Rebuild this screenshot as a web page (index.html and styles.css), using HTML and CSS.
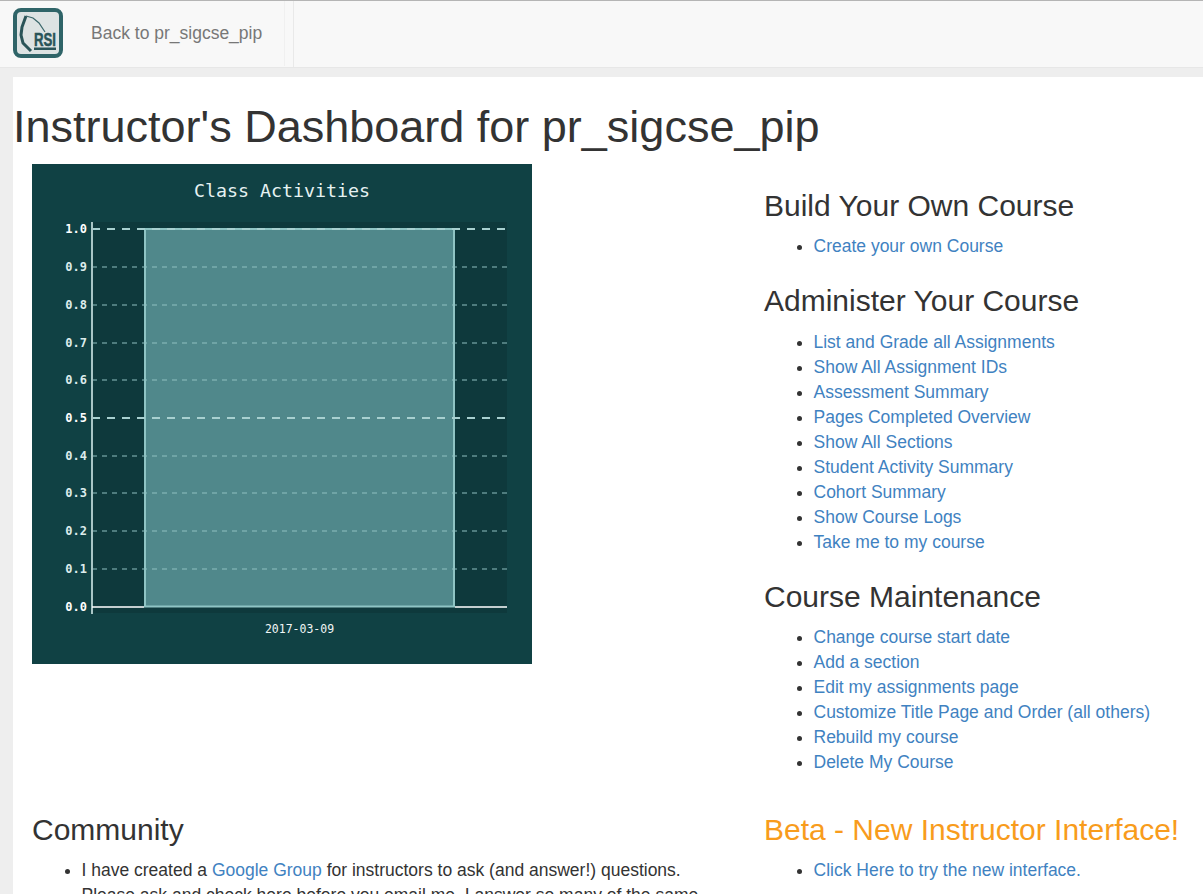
FILE: index.html
```html
<!DOCTYPE html>
<html lang="en">
<head>
<meta charset="utf-8">
<title>Instructor's Dashboard</title>
<link rel="stylesheet" href="styles.css">
</head>
<body>
<nav class="navbar">
  <a class="brand" href="#">
    <svg class="logo" width="50" height="50" viewBox="0 0 50 50">
      <rect x="2" y="2" width="46" height="46" rx="6" fill="#dde3e3" stroke="#2f6468" stroke-width="4"/>
      <path d="M13 8 L9 19 L8 27 L10 35 L18 43" fill="none" stroke="#2a5458" stroke-width="3"/>
      <path d="M13 8 L20 10 L26 15 L32 24" fill="none" stroke="#3a666a" stroke-width="1.200"/>
      <text x="21" y="38" class="logo-text" textLength="22" lengthAdjust="spacingAndGlyphs">RSI</text>
      <rect x="21" y="39.500" width="22" height="2.500" fill="#2a5458"/>
    </svg>
  </a>
  <a class="nav-link" href="#">Back to pr_sigcse_pip</a>
  <div class="nav-cell"></div>
</nav>
<main class="page">
  <h1>Instructor's Dashboard for pr_sigcse_pip</h1>
  <div class="row row-top">
    <div class="col">
      <svg class="chart" width="500" height="500" viewBox="0 0 500 500">
        <rect width="500" height="500" fill="#104144"/>
        <rect x="60" y="58" width="415" height="391" fill="#0e393c"/>
        <text x="250" y="33" class="title">Class Activities</text>
        <rect x="113" y="65" width="309" height="377.500" fill="#50888b" stroke="#8fc4c4" stroke-width="2"/>
        <g class="grid">
          <path d="M60 103H475M60 141H475M60 179H475M60 216H475M60 292H475M60 329H475M60 367H475M60 405H475"/>
        </g>
        <g class="grid-major">
          <path d="M60 65H475M60 254H475"/>
        </g>
        <path d="M60 58V450" stroke="#a9c6c6" stroke-width="2" fill="none"/>
        <path d="M60 443H112M423 443H475" stroke="#ffffff" stroke-width="1.500" fill="none"/>
        <g class="ticks">
          <text x="55" y="69" class="strong">1.0</text>
          <text x="55" y="107">0.9</text>
          <text x="55" y="145">0.8</text>
          <text x="55" y="183">0.7</text>
          <text x="55" y="220">0.6</text>
          <text x="55" y="258" class="strong">0.5</text>
          <text x="55" y="296">0.4</text>
          <text x="55" y="333">0.3</text>
          <text x="55" y="371">0.2</text>
          <text x="55" y="409">0.1</text>
          <text x="55" y="447" class="strong">0.0</text>
        </g>
        <text x="267.500" y="469" class="date">2017-03-09</text>
      </svg>
    </div>
    <div class="col col-links">
      <h3>Build Your Own Course</h3>
      <ul>
        <li><a href="#">Create your own Course</a></li>
      </ul>
      <h3>Administer Your Course</h3>
      <ul>
        <li><a href="#">List and Grade all Assignments</a></li>
        <li><a href="#">Show All Assignment IDs</a></li>
        <li><a href="#">Assessment Summary</a></li>
        <li><a href="#">Pages Completed Overview</a></li>
        <li><a href="#">Show All Sections</a></li>
        <li><a href="#">Student Activity Summary</a></li>
        <li><a href="#">Cohort Summary</a></li>
        <li><a href="#">Show Course Logs</a></li>
        <li><a href="#">Take me to my course</a></li>
      </ul>
      <h3>Course Maintenance</h3>
      <ul>
        <li><a href="#">Change course start date</a></li>
        <li><a href="#">Add a section</a></li>
        <li><a href="#">Edit my assignments page</a></li>
        <li><a href="#">Customize Title Page and Order (all others)</a></li>
        <li><a href="#">Rebuild my course</a></li>
        <li><a href="#">Delete My Course</a></li>
      </ul>
    </div>
  </div>
  <div class="row row-bottom">
    <div class="col">
      <h3>Community</h3>
      <ul>
        <li>I have created a <a href="#">Google Group</a> for instructors to ask (and answer!) questions. Please ask and check here before you email me. I answer so many of the same questions over and over.</li>
      </ul>
    </div>
    <div class="col">
      <h3 class="beta">Beta - New Instructor Interface!</h3>
      <ul>
        <li><a href="#">Click Here to try the new interface.</a></li>
      </ul>
    </div>
  </div>
</main>
</body>
</html>
```
FILE: styles.css
```css
html, body {
  margin: 0;
  padding: 0;
  height: 894px;
  overflow: hidden;
}
body {
  background: #eeeeee;
  color: #333333;
  font-family: "Liberation Sans", Arial, sans-serif;
  font-size: 17.5px;
  line-height: 25px;
}
a {
  color: #3f82c1;
  text-decoration: none;
}
.navbar {
  display: flex;
  height: 66px;
  background: #f8f8f8;
  border-top: 1px solid #b5b5b5;
  border-bottom: 1px solid #e7e7e7;
  margin-bottom: 9px;
}
.brand {
  display: flex;
  align-items: center;
  padding: 0 4px 0 13px;
  height: 63px;
}
.logo-text {
  font-family: "Liberation Sans", Arial, sans-serif;
  font-size: 18px;
  font-weight: 700;
  fill: #2a5458;
  stroke: #2a5458;
  stroke-width: 0.5;
}
.nav-link {
  display: flex;
  align-items: center;
  height: 65px;
  padding: 0 22px 0 24px;
  color: #777777;
  border-right: 1px solid #f0f0f0;
}
.nav-cell {
  width: 8px;
  border-right: 1px solid #e9e9e9;
}
.page {
  margin-left: 13px;
  background: #ffffff;
  height: 817px;
  overflow: hidden;
}
h1 {
  margin: 0;
  padding: 24px 0 11px;
  font-weight: 400;
  font-size: 45px;
  line-height: 52px;
}
.row {
  display: grid;
  grid-template-columns: 732px 1fr;
}
.row-bottom {
  margin-top: 28px;
}
.col {
  padding: 0 19px;
  min-width: 0;
}
.chart {
  display: block;
}
.title {
  font-family: "DejaVu Sans Mono", monospace;
  font-size: 18.300px;
  fill: #e6f2f2;
  text-anchor: middle;
}
.ticks text {
  font-family: "DejaVu Sans Mono", monospace;
  font-size: 12px;
  font-weight: 700;
  fill: #dcecec;
  text-anchor: end;
}
.ticks .strong {
  fill: #ffffff;
}
.date {
  font-family: "DejaVu Sans Mono", monospace;
  font-size: 11.500px;
  fill: #f0f6f6;
  text-anchor: middle;
}
.grid path {
  stroke: #8fc0c0;
  stroke-width: 1;
  stroke-dasharray: 5 5;
  fill: none;
}
.grid-major path {
  stroke: #a8d0d0;
  stroke-width: 2;
  stroke-dasharray: 8 7;
  fill: none;
}
h3 {
  margin: 26px 0 12.400px;
  font-weight: 400;
  font-size: 30px;
  line-height: 32px;
  color: #333333;
}
.beta {
  color: #f89c1c;
}
.row-bottom h3 {
  margin: 0 0 11.500px;
}
ul {
  margin: 0 0 11px;
  padding: 0 0 0 49.500px;
}
```
